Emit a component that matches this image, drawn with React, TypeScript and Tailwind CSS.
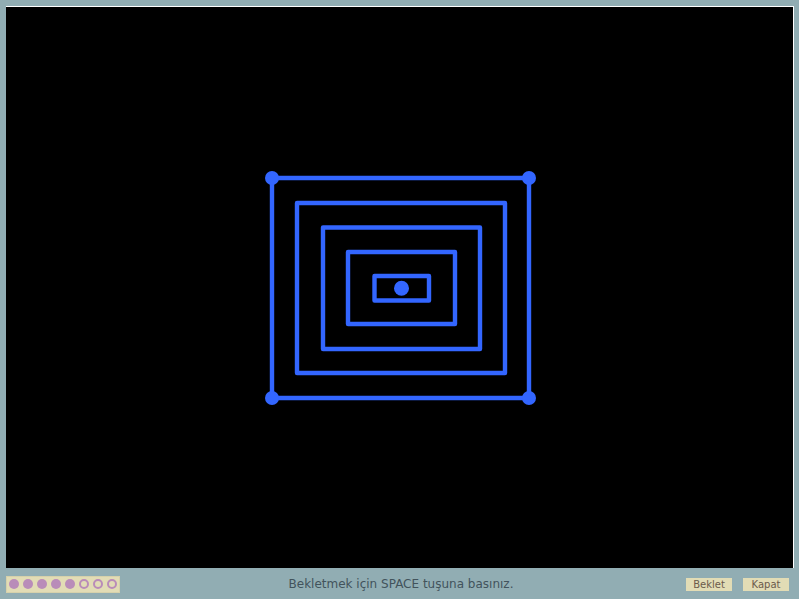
const rects = [
  { x1: 272, y1: 178, x2: 529, y2: 398 },
  { x1: 297, y1: 203, x2: 505, y2: 373 },
  { x1: 323, y1: 227.5, x2: 480, y2: 349 },
  { x1: 348, y1: 252, x2: 455, y2: 324 },
  { x1: 374.5, y1: 276, x2: 429, y2: 300.5 },
];

const corners = [
  [272, 178],
  [529, 178],
  [272, 398],
  [529, 398],
];

const progress = [true, true, true, true, true, false, false, false];

const App = () => {
  return (
    <div
      className="w-[799px] h-[599px] bg-[#91adb3] flex flex-col pt-[6px] pl-[6px] pr-[5px] overflow-hidden"
      style={{ fontFamily: '"DejaVu Sans", Verdana, sans-serif' }}
    >
      {/* Canvas */}
      <div className="h-[562px] bg-black border-t border-r border-white shrink-0">
        <svg width="787" height="561" viewBox="6 7 787 561" className="block">
          {rects.map((r, i) => (
            <rect
              key={i}
              x={r.x1}
              y={r.y1}
              width={r.x2 - r.x1}
              height={r.y2 - r.y1}
              fill="none"
              stroke="#3366ff"
              strokeWidth={4.4}
              strokeLinejoin="round"
            />
          ))}
          {corners.map(([cx, cy], i) => (
            <circle key={i} cx={cx} cy={cy} r={7} fill="#3366ff" />
          ))}
          <circle cx={401.5} cy={288.3} r={7.5} fill="#3366ff" />
        </svg>
      </div>

      {/* Status bar */}
      <div className="flex-1 flex items-center pt-[1px]">
        <div className="w-[114px] h-[17px] bg-[#e2dcb5] border border-[#d6d1ab] flex items-center gap-[4px] pl-[2px]">
          {progress.map((done, i) => (
            <span
              key={i}
              className={
                done
                  ? "w-[10px] h-[10px] rounded-full bg-[#b98cb9]"
                  : "w-[10px] h-[10px] rounded-full border-2 border-[#b98cb9]"
              }
            />
          ))}
        </div>
        <div className="flex-1 text-center text-[12px] text-[#42535c] pr-[4px]">
          Bekletmek için SPACE tuşuna basınız.
        </div>
        <div className="flex gap-[11px] pr-[5px]">
          <button className="w-[46px] h-[13px] bg-[#e2dcb5] text-[10px] leading-[13px] text-[#6b5b4c]">
            Beklet
          </button>
          <button className="w-[46px] h-[13px] bg-[#e2dcb5] text-[10px] leading-[13px] text-[#6b5b4c]">
            Kapat
          </button>
        </div>
      </div>
    </div>
  );
};

export default App;
